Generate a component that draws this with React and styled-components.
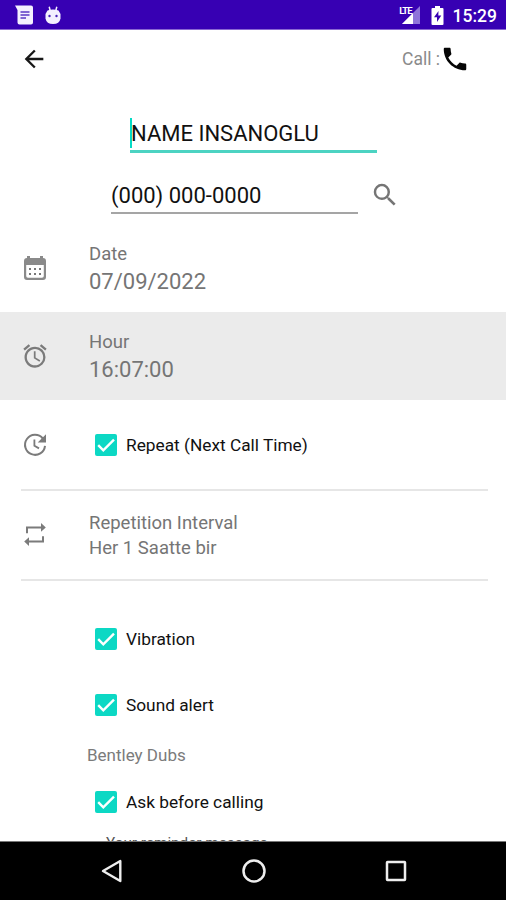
import React, { useState } from "react";
import styled, { createGlobalStyle } from "styled-components";

const GlobalStyle = createGlobalStyle`
  * {
    box-sizing: border-box;
  }
  body {
    margin: 0;
    background-color: #fff;
    font-family: Roboto, "Liberation Sans", sans-serif;
  }
`;

const CheckRow = ({ label }) => {
  const [checked, setChecked] = useState(true);
  return (
    <CheckLabel onClick={() => setChecked(!checked)}>
      <Box $checked={checked}>
        {checked && (
          <svg width="22" height="22" viewBox="0 0 22 22" fill="none" stroke="#fff" strokeWidth="2.4">
            <path d="M3.2 11.2l5.1 5.1L19 5.6" />
          </svg>
        )}
      </Box>
      <CheckText>{label}</CheckText>
    </CheckLabel>
  );
};

const CalendarIcon = () => (
  <svg width="24" height="26" viewBox="0 0 24 26">
    <path
      fill="#8a8a8a"
      fillRule="evenodd"
      d="M4 1h3v2h10V1h3v2a3 3 0 0 1 3 3v16a3 3 0 0 1-3 3H4a3 3 0 0 1-3-3V6a3 3 0 0 1 3-3zM3.2 10v11q0 1.8 1.8 1.8h14q1.8 0 1.8-1.8V10z"
    />
    <path
      fill="#777"
      d="M6 13h2v2H6zM11 13h2v2h-2zM16 13h2v2h-2zM6 18h2v2H6zM11 18h2v2h-2zM16 18h2v2h-2z"
    />
  </svg>
);

const AlarmIcon = () => (
  <svg width="28" height="28" viewBox="0 0 24 24" fill="#7b7b7b">
    <path d="M22 5.72l-4.6-3.86-1.29 1.53 4.6 3.86L22 5.72zM7.88 3.39L6.6 1.86 2 5.71l1.29 1.53 4.59-3.85zM12.5 8H11v6l4.75 2.85.75-1.23-4-2.37V8zM12 4c-4.97 0-9 4.03-9 9s4.02 9 9 9a9 9 0 0 0 0-18zm0 16c-3.87 0-7-3.13-7-7s3.13-7 7-7 7 3.13 7 7-3.13 7-7 7z" />
  </svg>
);

const UpdateIcon = () => (
  <svg width="26" height="26" viewBox="0 0 26 26" fill="none" stroke="#7b7b7b" strokeWidth="2">
    <path d="M20.8 6.5A10 10 0 1 0 23 13.8" />
    <path d="M12.4 7.5v6.2l4.6 2.7" strokeWidth="1.8" />
    <path d="M24 2.2v8.3h-8.3z" fill="#7b7b7b" stroke="none" />
  </svg>
);

const RepeatIcon = () => (
  <svg width="24" height="26" viewBox="0 0 24 26" fill="none" stroke="#7b7b7b" strokeWidth="2">
    <path d="M4 11.2V5.4h14M20 14.2v5.4H6" />
    <path d="M18 1l4.8 4.4L18 9.8zM6 15.2l-4.8 4.4L6 24z" fill="#7b7b7b" stroke="none" />
  </svg>
);

function App() {
  return (
    <Screen>
      <GlobalStyle />
      <StatusBar>
        <StatusGroup>
          <svg width="19" height="20" viewBox="0 0 19 20">
            <path d="M0 0.5h16q2 0 2 2v15q0 2-2 2H4.5q-2 0-2-2V5z" fill="#f4f0ff" />
            <path d="M5.5 7h9M5.5 10h9M5.5 13h5.5" stroke="#5b38c4" strokeWidth="1.6" />
          </svg>
          <svg width="16" height="19" viewBox="0 0 16 19">
            <path d="M4.2 0.8l1 4M11.8 0.8l-1 4" stroke="#f4f0ff" strokeWidth="1.5" />
            <path d="M2.5 4.5Q8 2.5 13.5 4.5L15.5 8v4.5Q14.5 18 8 18T0.5 12.5V8z" fill="#f4f0ff" />
            <circle cx="4.5" cy="10" r="1.2" fill="#4720b8" />
            <circle cx="11.5" cy="10" r="1.2" fill="#4720b8" />
          </svg>
        </StatusGroup>
        <StatusGroup>
          <Signal>
            <Lte>LTE</Lte>
            <svg width="18" height="18" viewBox="0 0 18 18">
              <path d="M18 0v18H0z" fill="#8f74da" />
              <path d="M11 7v11H0z" fill="#fff" />
            </svg>
          </Signal>
          <svg width="13" height="19" viewBox="0 0 13 19">
            <path d="M4 0h5v2h2.5q1 0 1 1v15q0 1-1 1h-10q-1 0-1-1V3q0-1 1-1H4z" fill="#fff" />
            <path d="M7.5 5L3 11.3h3V16l4.3-6.5h-3z" fill="#3700b3" />
          </svg>
          <Clock>15:29</Clock>
        </StatusGroup>
      </StatusBar>
      <Toolbar>
        <svg width="28" height="28" viewBox="0 0 24 24" fill="#181818">
          <path d="M20 11H7.83l5.59-5.59L12 4l-8 8 8 8 1.41-1.41L7.83 13H20v-2z" />
        </svg>
        <Call>
          Call :
          <svg width="30" height="30" viewBox="0 0 24 24" fill="#050505">
            <path d="M6.62 10.79c1.44 2.83 3.76 5.14 6.59 6.59l2.2-2.2c.27-.27.67-.36 1.02-.24 1.12.37 2.33.57 3.57.57.55 0 1 .45 1 1V20c0 .55-.45 1-1 1-9.39 0-17-7.61-17-17 0-.55.45-1 1-1h3.5c.55 0 1 .45 1 1 0 1.25.2 2.45.57 3.57.11.35.03.74-.25 1.02l-2.2 2.2z" />
          </svg>
        </Call>
      </Toolbar>
      <Content>
        <NameField>
          <Caret />
          NAME INSANOGLU
        </NameField>
        <PhoneRow>
          <PhoneField>(000) 000-0000</PhoneField>
          <svg width="30" height="30" viewBox="0 0 24 24" fill="#757575">
            <path d="M15.5 14h-.79l-.28-.27A6.471 6.471 0 0 0 16 9.5 6.5 6.5 0 1 0 9.5 16c1.61 0 3.09-.59 4.23-1.57l.27.28v.79l5 4.99L20.49 19l-4.99-5zm-6 0C7.01 14 5 11.99 5 9.5S7.01 5 9.5 5 14 7.01 14 9.5 11.99 14 9.5 14z" />
          </svg>
        </PhoneRow>
        <Item>
          <IconCell>
            <CalendarIcon />
          </IconCell>
          <Texts>
            <Label>Date</Label>
            <Value>07/09/2022</Value>
          </Texts>
        </Item>
        <Item $active>
          <IconCell>
            <AlarmIcon />
          </IconCell>
          <Texts>
            <Label>Hour</Label>
            <Value>16:07:00</Value>
          </Texts>
        </Item>
        <Item $height={89}>
          <IconCell>
            <UpdateIcon />
          </IconCell>
          <CheckRow label="Repeat (Next Call Time)" />
        </Item>
        <Divider />
        <Item>
          <IconCell>
            <RepeatIcon />
          </IconCell>
          <Texts>
            <Label>Repetition Interval</Label>
            <Label>Her 1 Saatte bir</Label>
          </Texts>
        </Item>
        <Divider />
        <Options>
          <CheckRow label="Vibration" />
          <CheckRow label="Sound alert" />
          <Ringtone>Bentley Dubs</Ringtone>
          <CheckRow label="Ask before calling" />
          <Hint>Your reminder message</Hint>
        </Options>
      </Content>
      <NavBar>
        <svg width="24" height="26" viewBox="0 0 24 26" fill="none" stroke="#eee" strokeWidth="2.4">
          <path d="M21.3 3v20L4 13z" strokeLinejoin="round" />
        </svg>
        <svg width="26" height="26" viewBox="0 0 26 26" fill="none" stroke="#eee" strokeWidth="2.5">
          <circle cx="13" cy="13" r="10.5" />
        </svg>
        <svg width="24" height="24" viewBox="0 0 24 24" fill="none" stroke="#eee" strokeWidth="2.5">
          <rect x="3" y="3" width="18" height="18" rx="0.5" />
        </svg>
      </NavBar>
    </Screen>
  );
}

export default App;

const Screen = styled.div`
  width: 506px;
  height: 900px;
  display: flex;
  flex-direction: column;
  overflow: hidden;
  background-color: #fff;
`;

const StatusBar = styled.div`
  display: flex;
  align-items: center;
  justify-content: space-between;
  flex: none;
  height: 30px;
  padding: 1px 9px 0 15px;
  background-color: #3700b3;
  border-bottom: 1px solid #8a68d2;
`;

const StatusGroup = styled.div`
  display: flex;
  align-items: center;
  gap: 11px;
`;

const Signal = styled.div`
  display: flex;
  align-items: flex-start;
  svg {
    margin-left: -9px;
  }
`;

const Lte = styled.span`
  font-size: 9.5px;
  line-height: 10px;
  font-weight: 700;
  letter-spacing: -1px;
  margin-right: -1px;
  color: #fff;
`;

const Clock = styled.span`
  font-size: 17.5px;
  line-height: 20px;
  font-weight: 500;
  color: #fff;
  margin: 2px 0 0 -2px;
`;

const Toolbar = styled.div`
  display: flex;
  align-items: center;
  justify-content: space-between;
  flex: none;
  height: 57px;
  padding: 0 36px 0 20px;
`;

const Call = styled.div`
  display: flex;
  align-items: center;
  font-size: 17.5px;
  color: #8a8a8a;
`;

const Content = styled.div`
  flex: 1;
  min-height: 0;
  overflow: hidden;
`;

const NameField = styled.div`
  display: flex;
  align-items: center;
  width: 247px;
  height: 37px;
  margin: 29px 0 0 130px;
  border-bottom: 3px solid #4cd3c2;
  font-size: 22px;
  color: #111;
`;

const Caret = styled.span`
  width: 2px;
  height: 30px;
  margin-right: -1px;
  background-color: #03dac5;
`;

const PhoneRow = styled.div`
  display: flex;
  align-items: center;
  gap: 12px;
  height: 40px;
  margin: 22px 0 9px 111px;
`;

const PhoneField = styled.div`
  width: 247px;
  height: 37px;
  border-bottom: 2px solid #a5a5a5;
  font-size: 22px;
  line-height: 38px;
  color: #111;
`;

const Item = styled.div`
  display: flex;
  align-items: center;
  height: ${({ $height }) => $height || 88}px;
  background-color: ${({ $active }) => ($active ? "#ebebeb" : "transparent")};
`;

const IconCell = styled.div`
  display: flex;
  justify-content: center;
  width: 70px;
  margin-right: 19px;
`;

const Texts = styled.div`
  display: flex;
  flex-direction: column;
  padding-top: 2px;
  color: #757575;
`;

const Label = styled.span`
  font-size: 18.5px;
  line-height: 25px;
`;

const Value = styled.span`
  font-size: 22px;
  line-height: 30px;
`;

const CheckLabel = styled.label`
  display: flex;
  align-items: center;
  gap: 9px;
  padding-left: 6px;
  cursor: pointer;
`;

const Box = styled.span`
  display: flex;
  width: 22px;
  height: 22px;
  border-radius: 2px;
  background-color: ${({ $checked }) => ($checked ? "#0cd8c4" : "transparent")};
  box-shadow: ${({ $checked }) => ($checked ? "none" : "inset 0 0 0 2px #757575")};
`;

const CheckText = styled.span`
  font-size: 17.3px;
  line-height: 22px;
  color: #111;
`;

const Divider = styled.div`
  height: 2px;
  margin: 0 18px 0 21px;
  background-color: #e6e6e6;
`;

const Options = styled.div`
  display: flex;
  flex-direction: column;
  align-items: flex-start;
  padding: 47px 0 0 89px;
  gap: 43.5px;
`;

const Ringtone = styled.div`
  margin: -15.5px 0 -18px -2px;
  font-size: 17px;
  line-height: 22px;
  color: #7b7b7b;
`;

const Hint = styled.div`
  margin: -23.5px 0 0 17px;
  font-size: 15.3px;
  line-height: 20px;
  color: #555;
`;

const NavBar = styled.div`
  display: flex;
  align-items: center;
  justify-content: space-between;
  flex: none;
  height: 59px;
  padding: 0 98px 0 99px;
  background-color: #000;
  border-top: 1px solid #777;
`;
